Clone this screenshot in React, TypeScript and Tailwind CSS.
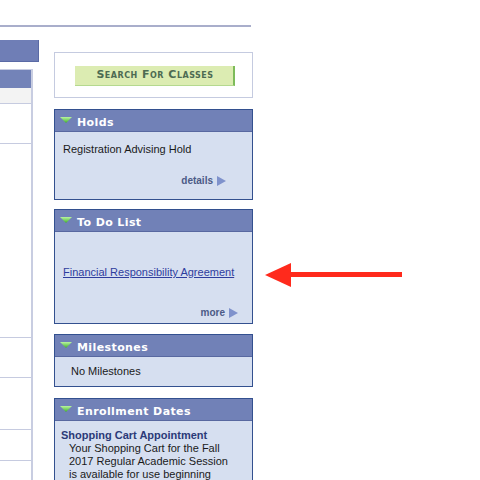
import { ReactNode } from "react";

const bodyFont = { fontFamily: '"Liberation Sans", Arial, sans-serif' };
const verdana = { fontFamily: '"DejaVu Sans", Verdana, sans-serif' };

function DownTriangle() {
  return (
    <svg width="12" height="6" viewBox="0 0 12 6" className="mt-[7px] shrink-0">
      <defs>
        <linearGradient id="gt" x1="0" y1="0" x2="0" y2="1">
          <stop offset="0" stopColor="#b8f5a0" />
          <stop offset="1" stopColor="#3fae2a" />
        </linearGradient>
      </defs>
      <polygon points="0,0 12,0 6,6" fill="url(#gt)" />
    </svg>
  );
}

function PlayArrow() {
  return (
    <svg width="9" height="10" viewBox="0 0 9 10" className="shrink-0">
      <polygon points="0,0 9,5 0,10" fill="#7f92cc" />
    </svg>
  );
}

function Pagelet({ title, children, className }: { title: string; children: ReactNode; className?: string }) {
  return (
    <div className={`border border-[#33508f] bg-[#d6dff0] ${className ?? ""}`}>
      <div className="flex h-[22px] items-start gap-[5px] border-b border-[#5868a0] bg-[#7181b7] pl-[5px]">
        <DownTriangle />
        <span className="mt-[5px] text-[11px] font-bold leading-[16px] tracking-[0.4px] text-white" style={verdana}>
          {title}
        </span>
      </div>
      {children}
    </div>
  );
}

function MoreLink({ label, className }: { label: string; className?: string }) {
  return (
    <div className={`flex items-center justify-end gap-[4px] ${className ?? ""}`}>
      <span className="text-[10px] font-bold leading-[10px] text-[#4b5a86]">{label}</span>
      <PlayArrow />
    </div>
  );
}

export default function App() {
  return (
    <div className="relative h-[480px] w-[480px] overflow-hidden bg-white" style={bodyFont}>
      <div className="mt-[25px] h-[2px] w-[251px] bg-[#a9aecb]" />

      <div className="flex">
        {/* LEFT COLUMN */}
        <div className="w-[54px] shrink-0">
          <div className="mt-[13px] h-[22px] w-[39px] border-b border-r border-[#5a6aa5] bg-[#6f7eb6]" />
          <div className="mt-[7px] h-[420px] w-[33px] border-r-2 border-t border-[#c8cde1]">
            <div className="h-[18px] bg-[#7383b8]" />
            <div className="h-[16px] border-b border-[#c6cbe0] bg-[#f3f3f3]" />
            <div className="h-[40px] border-b border-[#c6cbe0]" />
            <div className="h-[194px] border-b border-[#c6cbe0]" />
            <div className="h-[40px] border-b border-[#c6cbe0]" />
            <div className="h-[52px] border-b border-[#c6cbe0]" />
            <div className="h-[31px] border-b border-[#c6cbe0]" />
          </div>
        </div>

        {/* RIGHT COLUMN */}
        <div className="w-[199px] shrink-0">
          <div className="mt-[25px] flex h-[46px] items-center border border-[#c5cbe0] pl-[20px] pt-[2px]">
            <button
              className="flex h-[20px] w-[160px] items-center justify-center border-b border-r-2 border-b-[#b5d98f] border-r-[#7dbb5a] bg-[#dcecb2] pl-[2px] text-[11px] font-bold tracking-[0.5px] text-[#4d6b52]"
              style={{ fontVariant: "small-caps", ...verdana }}
            >
              Search For Classes
            </button>
          </div>

          <Pagelet title="Holds" className="mt-[11px] h-[91px]">
            <div className="px-[8px] pt-[10px] text-[11px] leading-[14px] text-[#1a1a1a]">Registration Advising Hold</div>
            <MoreLink label="details" className="mt-[20px] pr-[26px]" />
          </Pagelet>

          <Pagelet title="To Do List" className="mt-[9px] h-[115px]">
            <div className="px-[8px] pt-[33px] text-[11px] leading-[14px]">
              <a href="#" className="text-[#2e3d9e] underline">
                Financial Responsibility Agreement
              </a>
            </div>
            <MoreLink label="more" className="mt-[29px] pr-[14px]" />
          </Pagelet>

          <Pagelet title="Milestones" className="mt-[10px] h-[53px]">
            <div className="pl-[16px] pt-[7px] text-[11px] leading-[14px] text-[#1a1a1a]">No Milestones</div>
          </Pagelet>

          <Pagelet title="Enrollment Dates" className="mt-[11px] h-[120px]">
            <div className="pl-[6px] pt-[8px] text-[11px] leading-[13px]">
              <div className="font-bold text-[#2b3a78]">Shopping Cart Appointment</div>
              <div className="pl-[8px] text-[#1a1a1a]">
                Your Shopping Cart for the Fall
                <br />
                2017 Regular Academic Session
                <br />
                is available for use beginning
              </div>
            </div>
          </Pagelet>
        </div>
      </div>

      {/* annotation arrow */}
      <svg className="absolute left-[260px] top-[258px]" width="150" height="34" viewBox="0 0 150 34">
        <line x1="28" y1="16.5" x2="142" y2="16.5" stroke="#ff2a1c" strokeWidth="5" />
        <polygon points="5,17 31,5 31,29" fill="#ff2a1c" />
      </svg>
    </div>
  );
}
